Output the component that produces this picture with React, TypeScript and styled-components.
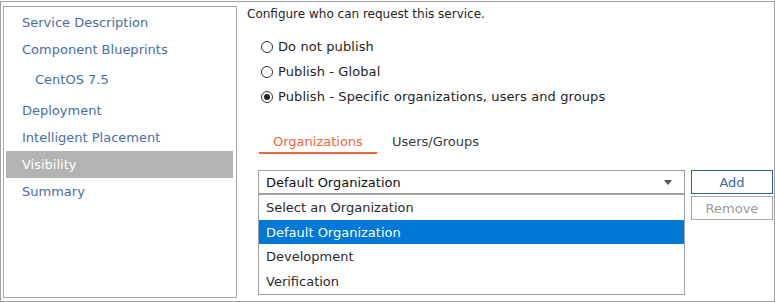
import styled, { createGlobalStyle } from 'styled-components';

const GlobalStyle = createGlobalStyle`
	* {
		box-sizing: border-box;
	}

	body {
		margin: 0;
		background: #ffffff;
		font-family: 'DejaVu Sans', 'Liberation Sans', sans-serif;
		font-size: 13px;
	}
`;

type NavItem = {
	label: string;
	sub?: boolean;
	active?: boolean;
};

const navItems: NavItem[] = [
	{ label: 'Service Description' },
	{ label: 'Component Blueprints' },
	{ label: 'CentOS 7.5', sub: true },
	{ label: 'Deployment' },
	{ label: 'Intelligent Placement' },
	{ label: 'Visibility', active: true },
	{ label: 'Summary' }
];

const radioOptions = [
	{ label: 'Do not publish', checked: false },
	{ label: 'Publish - Global', checked: false },
	{ label: 'Publish - Specific organizations, users and groups', checked: true }
];

const organizations = [
	{ label: 'Select an Organization', selected: false },
	{ label: 'Default Organization', selected: true },
	{ label: 'Development', selected: false },
	{ label: 'Verification', selected: false }
];

const Frame = styled.div`
	display: flex;
	width: 775px;
	height: 301px;
	margin-top: 1px;
	border: 1px solid #a0a0a0;
	padding: 4px 0 3px 2px;
`;

const Sidebar = styled.nav`
	width: 234px;
	flex-shrink: 0;
	border: 1px solid #a8a8a8;
	padding: 2px 3px 0 2px;
	display: flex;
	flex-direction: column;
`;

const SidebarItem = styled.div<{ $sub?: boolean; $active?: boolean }>`
	height: 27px;
	display: flex;
	align-items: center;
	padding-left: ${(p) => (p.$sub ? 29 : 16)}px;
	margin: ${(p) => (p.$sub ? '3px 0 4px' : '0')};
	color: ${(p) => (p.$active ? '#ffffff' : '#4a6ea3')};
	background: ${(p) => (p.$active ? '#b3b3b3' : 'transparent')};
`;

const Content = styled.section`
	flex: 1;
	padding: 0 0 0 10px;
	margin-top: -4px;
	display: flex;
	flex-direction: column;
	color: #1e1e1e;
`;

const Title = styled.p`
	margin: 2px 0 0;
	height: 20px;
	line-height: 20px;
	font-size: 12px;
`;

const RadioGroup = styled.div`
	display: flex;
	flex-direction: column;
	margin: 10px 0 0 14px;
`;

const RadioRow = styled.label`
	display: flex;
	align-items: center;
	gap: 5px;
	height: 25px;
	letter-spacing: 0.1px;
`;

const RadioCircle = styled.span<{ $checked?: boolean }>`
	width: 12px;
	height: 12px;
	border-radius: 50%;
	border: 1px solid #333333;
	display: flex;
	align-items: center;
	justify-content: center;

	&::after {
		content: '';
		width: 6px;
		height: 6px;
		border-radius: 50%;
		background: ${(p) => (p.$checked ? '#222222' : 'transparent')};
	}
`;

const Tabs = styled.div`
	display: flex;
	gap: 1px;
	margin: 22px 0 0 12px;
`;

const Tab = styled.div<{ $active?: boolean }>`
	height: 23px;
	padding: 0 14px;
	line-height: 21px;
	color: ${(p) => (p.$active ? '#f0643a' : '#3a3a3a')};
	border-bottom: 2px solid ${(p) => (p.$active ? '#f0643a' : 'transparent')};
`;

const PickerRow = styled.div`
	display: flex;
	gap: 6px;
	margin: 16px 0 0 11px;
`;

const SelectWrap = styled.div`
	position: relative;
	width: 427px;
`;

const SelectBox = styled.div`
	height: 24px;
	border: 1px solid #a0a0a0;
	padding: 0 12px 0 7px;
	display: flex;
	align-items: center;
	justify-content: space-between;
	color: #111111;
`;

const Caret = styled.span`
	width: 0;
	height: 0;
	border-left: 4px solid transparent;
	border-right: 4px solid transparent;
	border-top: 5px solid #555555;
`;

const OptionList = styled.ul`
	position: absolute;
	top: 24px;
	left: 0;
	right: 0;
	margin: 0;
	padding: 0;
	list-style: none;
	border: 1px solid #a0a0a0;
	background: #ffffff;
`;

const OptionItem = styled.li<{ $selected?: boolean }>`
	height: 24.7px;
	display: flex;
	align-items: center;
	padding-left: 7px;
	color: ${(p) => (p.$selected ? '#ffffff' : '#2a2a2a')};
	background: ${(p) => (p.$selected ? '#0078d7' : 'transparent')};
`;

const ButtonColumn = styled.div`
	display: flex;
	flex-direction: column;
	gap: 2px;
`;

const ActionButton = styled.button<{ $disabled?: boolean }>`
	width: 82px;
	height: 24px;
	padding: 0;
	background: #ffffff;
	font: inherit;
	border: 1px solid ${(p) => (p.$disabled ? '#a8a8a8' : '#2f6196')};
	color: ${(p) => (p.$disabled ? '#9a9a9a' : '#3b6aa0')};
`;

const App = () => {
	return (
		<>
			<GlobalStyle />
			<Frame>
				<Sidebar>
					{navItems.map((item) => (
						<SidebarItem
							key={item.label}
							$sub={item.sub}
							$active={item.active}
						>
							{item.label}
						</SidebarItem>
					))}
				</Sidebar>
				<Content>
					<Title>Configure who can request this service.</Title>
					<RadioGroup>
						{radioOptions.map((opt) => (
							<RadioRow key={opt.label}>
								<RadioCircle $checked={opt.checked} />
								{opt.label}
							</RadioRow>
						))}
					</RadioGroup>
					<Tabs>
						<Tab $active>Organizations</Tab>
						<Tab>Users/Groups</Tab>
					</Tabs>
					<PickerRow>
						<SelectWrap>
							<SelectBox>
								Default Organization
								<Caret />
							</SelectBox>
							<OptionList>
								{organizations.map((org) => (
									<OptionItem
										key={org.label}
										$selected={org.selected}
									>
										{org.label}
									</OptionItem>
								))}
							</OptionList>
						</SelectWrap>
						<ButtonColumn>
							<ActionButton>Add</ActionButton>
							<ActionButton $disabled>Remove</ActionButton>
						</ButtonColumn>
					</PickerRow>
				</Content>
			</Frame>
		</>
	);
};

export default App;
